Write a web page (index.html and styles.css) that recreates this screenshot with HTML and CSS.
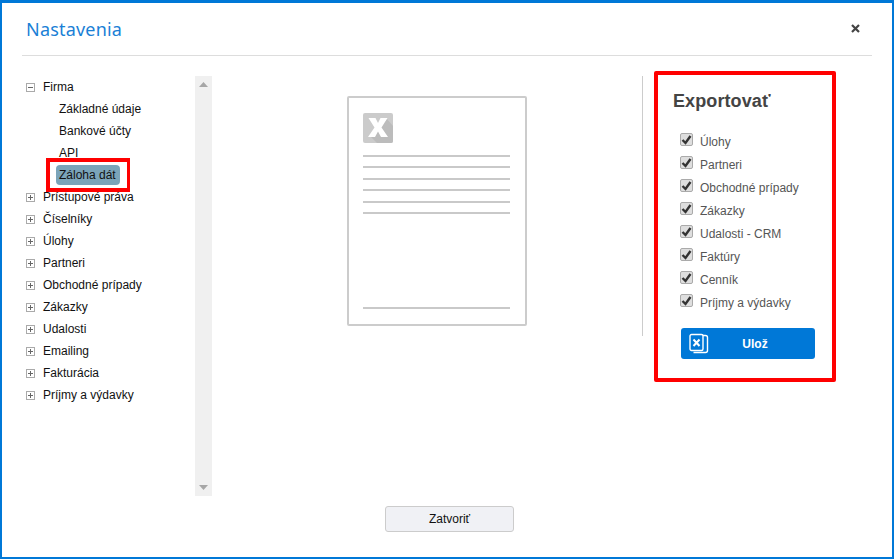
FILE: index.html
```html
<!DOCTYPE html>
<html lang="sk">
<head>
<meta charset="utf-8">
<title>Nastavenia</title>
<link rel="stylesheet" href="styles.css">
</head>
<body>
<div class="window">
  <header class="head">
    <h1 class="title">Nastavenia</h1>
    <svg class="close" width="9" height="9" viewBox="0 0 9 9"><path d="M1 1l7 7M8 1l-7 7" stroke="#444" stroke-width="2.2" fill="none"/></svg>
  </header>
  <main class="content">
    <nav class="side">
      <ul class="tree">
        <li class="node"><span class="tog"><svg width="9" height="9" viewBox="0 0 9 9"><rect x=".5" y=".5" width="8" height="8" fill="#fff" stroke="#aaa"/><path d="M2 4.5h5" stroke="#666"/></svg></span>Firma</li>
        <li class="leaf">Základné údaje</li>
        <li class="leaf">Bankové účty</li>
        <li class="leaf">API</li>
        <li class="leaf"><span class="pill">Záloha dát<span class="mark"></span></span></li>
        <li class="node"><span class="tog"><svg width="9" height="9" viewBox="0 0 9 9"><rect x=".5" y=".5" width="8" height="8" fill="#fff" stroke="#aaa"/><path d="M2 4.5h5M4.5 2v5" stroke="#666"/></svg></span>Prístupové práva</li>
        <li class="node"><span class="tog"><svg width="9" height="9" viewBox="0 0 9 9"><rect x=".5" y=".5" width="8" height="8" fill="#fff" stroke="#aaa"/><path d="M2 4.5h5M4.5 2v5" stroke="#666"/></svg></span>Číselníky</li>
        <li class="node"><span class="tog"><svg width="9" height="9" viewBox="0 0 9 9"><rect x=".5" y=".5" width="8" height="8" fill="#fff" stroke="#aaa"/><path d="M2 4.5h5M4.5 2v5" stroke="#666"/></svg></span>Úlohy</li>
        <li class="node"><span class="tog"><svg width="9" height="9" viewBox="0 0 9 9"><rect x=".5" y=".5" width="8" height="8" fill="#fff" stroke="#aaa"/><path d="M2 4.5h5M4.5 2v5" stroke="#666"/></svg></span>Partneri</li>
        <li class="node"><span class="tog"><svg width="9" height="9" viewBox="0 0 9 9"><rect x=".5" y=".5" width="8" height="8" fill="#fff" stroke="#aaa"/><path d="M2 4.5h5M4.5 2v5" stroke="#666"/></svg></span>Obchodné prípady</li>
        <li class="node"><span class="tog"><svg width="9" height="9" viewBox="0 0 9 9"><rect x=".5" y=".5" width="8" height="8" fill="#fff" stroke="#aaa"/><path d="M2 4.5h5M4.5 2v5" stroke="#666"/></svg></span>Zákazky</li>
        <li class="node"><span class="tog"><svg width="9" height="9" viewBox="0 0 9 9"><rect x=".5" y=".5" width="8" height="8" fill="#fff" stroke="#aaa"/><path d="M2 4.5h5M4.5 2v5" stroke="#666"/></svg></span>Udalosti</li>
        <li class="node"><span class="tog"><svg width="9" height="9" viewBox="0 0 9 9"><rect x=".5" y=".5" width="8" height="8" fill="#fff" stroke="#aaa"/><path d="M2 4.5h5M4.5 2v5" stroke="#666"/></svg></span>Emailing</li>
        <li class="node"><span class="tog"><svg width="9" height="9" viewBox="0 0 9 9"><rect x=".5" y=".5" width="8" height="8" fill="#fff" stroke="#aaa"/><path d="M2 4.5h5M4.5 2v5" stroke="#666"/></svg></span>Fakturácia</li>
        <li class="node"><span class="tog"><svg width="9" height="9" viewBox="0 0 9 9"><rect x=".5" y=".5" width="8" height="8" fill="#fff" stroke="#aaa"/><path d="M2 4.5h5M4.5 2v5" stroke="#666"/></svg></span>Príjmy a výdavky</li>
      </ul>
      <div class="scroll">
        <svg width="9" height="5" viewBox="0 0 9 5"><path d="M4.500 0L9 5H0z" fill="#a6a6a6"/></svg>
        <svg width="9" height="5" viewBox="0 0 9 5"><path d="M4.500 5L9 0H0z" fill="#a6a6a6"/></svg>
      </div>
    </nav>
    <section class="preview">
      <div class="doc">
        <svg class="xl" width="30" height="30" viewBox="0 0 30 30">
          <rect width="30" height="30" rx="2" fill="#cbcbcb"/>
          <path d="M7 23L24 6l6 7v15a2 2 0 0 1-2 2H14z" fill="#bcbcbc"/>
          <path d="M5.500 5h7l2.500 5 2.500-5h7l-6 9.500 6.500 9.500h-7l-3-5.500-3 5.500H5l6.500-9.500z" fill="#fff"/>
        </svg>
        <div class="rule gap-a"></div>
        <div class="rule gap-b"></div>
        <div class="rule gap-c"></div>
        <div class="rule gap-b"></div>
        <div class="rule gap-c"></div>
        <div class="rule gap-b"></div>
        <div class="rule gap-end"></div>
      </div>
    </section>
    <aside class="export-wrap">
      <div class="export">
        <h2 class="ex-title">Exportovať</h2>
        <ul class="checks">
          <li class="check"><span class="cb"><svg width="11" height="10" viewBox="0 0 11 10"><path d="M1.500 5l3 3 5-7" stroke="#333" stroke-width="2.400" fill="none"/></svg></span>Úlohy</li>
          <li class="check"><span class="cb"><svg width="11" height="10" viewBox="0 0 11 10"><path d="M1.500 5l3 3 5-7" stroke="#333" stroke-width="2.400" fill="none"/></svg></span>Partneri</li>
          <li class="check"><span class="cb"><svg width="11" height="10" viewBox="0 0 11 10"><path d="M1.500 5l3 3 5-7" stroke="#333" stroke-width="2.400" fill="none"/></svg></span>Obchodné prípady</li>
          <li class="check"><span class="cb"><svg width="11" height="10" viewBox="0 0 11 10"><path d="M1.500 5l3 3 5-7" stroke="#333" stroke-width="2.400" fill="none"/></svg></span>Zákazky</li>
          <li class="check"><span class="cb"><svg width="11" height="10" viewBox="0 0 11 10"><path d="M1.500 5l3 3 5-7" stroke="#333" stroke-width="2.400" fill="none"/></svg></span>Udalosti - CRM</li>
          <li class="check"><span class="cb"><svg width="11" height="10" viewBox="0 0 11 10"><path d="M1.500 5l3 3 5-7" stroke="#333" stroke-width="2.400" fill="none"/></svg></span>Faktúry</li>
          <li class="check"><span class="cb"><svg width="11" height="10" viewBox="0 0 11 10"><path d="M1.500 5l3 3 5-7" stroke="#333" stroke-width="2.400" fill="none"/></svg></span>Cenník</li>
          <li class="check"><span class="cb"><svg width="11" height="10" viewBox="0 0 11 10"><path d="M1.500 5l3 3 5-7" stroke="#333" stroke-width="2.400" fill="none"/></svg></span>Príjmy a výdavky</li>
        </ul>
        <button class="save" type="button">
          <svg class="save-ico" width="20" height="21" viewBox="0 0 20 21" fill="none" stroke="#fff" stroke-width="1.400">
            <path d="M4.500 2.500h12a2 2 0 0 1 2 2v13a2 2 0 0 1-2 2h-12"/>
            <rect x="1" y="1.500" width="13" height="16" rx="1.500" fill="#0078d7"/>
            <path d="M4.500 6.500l6 6.500M10.500 6.500l-6 6.500" stroke-width="2"/>
          </svg>
          <span class="save-label">Ulož</span>
        </button>
      </div>
    </aside>
  </main>
  <footer class="foot">
    <button class="closebtn" type="button">Zatvoriť</button>
  </footer>
</div>
</body>
</html>
```

FILE: styles.css
```css
* { box-sizing: border-box; }
html, body { margin: 0; padding: 0; height: 100%; background: #fff; }
body { font-family: "Liberation Sans", Arial, sans-serif; font-size: 12px; color: #111; overflow: hidden; }
ul { list-style: none; margin: 0; padding: 0; }
h1, h2 { margin: 0; }
button { font-family: inherit; cursor: pointer; }

.window {
  width: 894px;
  height: 559px;
  border: 2px solid #0078d7;
  border-top-width: 3px;
  padding: 0 20px;
  display: flex;
  flex-direction: column;
}
.head {
  height: 53px;
  flex: none;
  border-bottom: 1px solid #ddd;
  display: flex;
  align-items: center;
  justify-content: space-between;
  padding: 0 12px 1px 4px;
}
.title {
  font-family: "Noto Sans", sans-serif;
  font-size: 18px;
  font-weight: 400;
  color: #1a7fd6;
  letter-spacing: .2px;
}
.close { display: block; }

.content { flex: 1; display: flex; align-items: flex-start; padding-top: 20px; }

.side { width: 190px; height: 420px; flex: none; display: flex; }
.tree { width: 173px; flex: none; }
.node, .leaf { height: 22px; display: flex; align-items: center; white-space: nowrap; }
.node { padding-left: 4px; }
.leaf { padding-left: 37px; }
.tog { width: 17px; display: flex; flex: none; }
.tog svg { display: block; }
.pill {
  position: relative;
  background: #7ba4b9;
  border-radius: 4px;
  height: 20px;
  line-height: 20px;
  width: 64px;
  margin-left: -3px;
  padding-left: 3px;
}
.mark {
  position: absolute;
  left: -10px;
  top: -7px;
  width: 84px;
  height: 34px;
  border: 4px solid #f00;
  border-right-width: 3px;
}
.scroll {
  width: 17px;
  height: 420px;
  background: #f0f0f0;
  display: flex;
  flex-direction: column;
  align-items: center;
  justify-content: space-between;
  padding: 6px 0 6px;
}
.scroll svg { display: block; }

.preview { width: 430px; flex: none; padding: 20px 0 0 135px; }
.doc {
  width: 180px;
  height: 230px;
  border: 2px solid #ccc;
  border-radius: 2px;
  padding: 15px 15px 0 14px;
}
.xl { display: block; }
.rule { height: 2px; background: #c9c9c9; }
.gap-a { margin-top: 12px; }
.gap-b { margin-top: 9px; }
.gap-c { margin-top: 10px; }
.gap-end { margin-top: 93px; }

.export-wrap { height: 260px; border-left: 1px solid #ccc; padding-left: 11px; }
.export {
  width: 182px;
  height: 311px;
  margin-top: -5px;
  border: 4px solid #f00;
  border-radius: 2px;
  padding: 15px 0 0 15px;
}
.ex-title { font-size: 18px; font-weight: 700; color: #444; line-height: 22px; letter-spacing: .1px; }
.checks { margin-top: 18px; }
.check { height: 23px; display: flex; align-items: center; color: #555; padding-left: 7px; }
.cb {
  width: 13px; height: 13px; flex: none; margin-right: 7px; margin-top: -4px;
  background: #dedede; border: 1px solid #aaa; border-radius: 2px;
  display: flex; align-items: center; justify-content: center;
}
.save {
  margin: 14px 0 0 8px;
  width: 134px; height: 31px;
  background: #0078d7; border: 0; border-radius: 3px;
  color: #fff; font-size: 12px; font-weight: 700;
  display: flex; align-items: center; padding: 0 0 0 8px;
}
.save-ico { flex: none; }
.save-label { flex: 1; text-align: center; padding-right: 14px; }

.foot { flex: none; display: flex; justify-content: center; padding: 0 0 25px 5px; }
.closebtn {
  width: 129px; height: 26px;
  background: #f0f1f5; border: 1px solid #ccc; border-radius: 3px;
  font-size: 12px; color: #111;
}
```
